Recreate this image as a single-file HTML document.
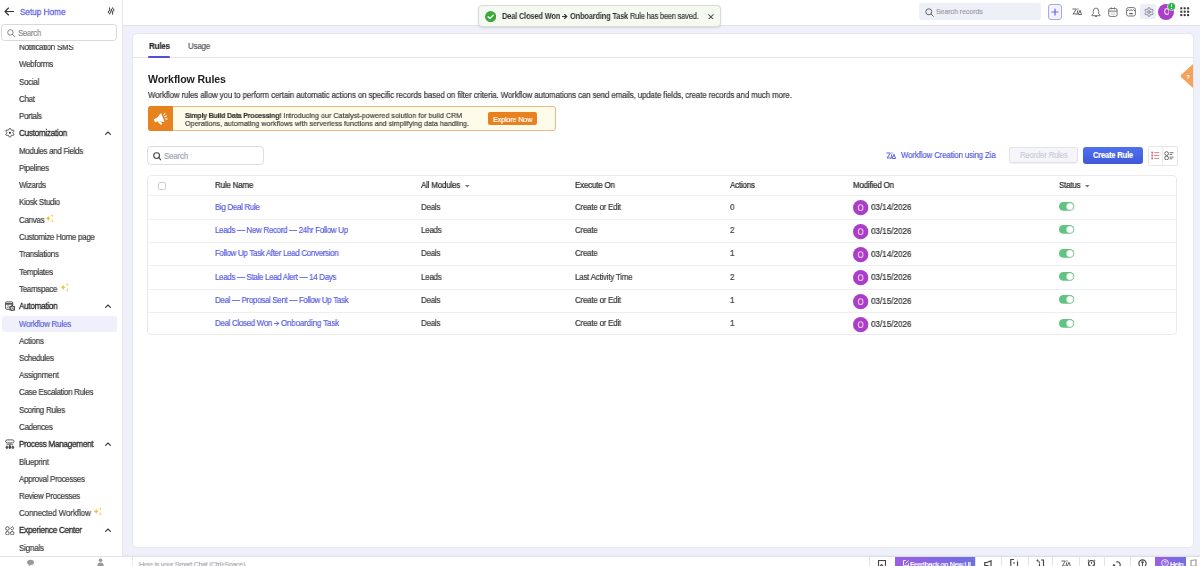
<!DOCTYPE html>
<html><head><meta charset="utf-8">
<style>
*{box-sizing:border-box;margin:0;padding:0}
html,body{width:1200px;height:566px;overflow:hidden;background:#eff0f9;font-family:"Liberation Sans",sans-serif;position:relative}
.a{position:absolute}
.t{position:absolute;white-space:nowrap;transform-origin:0 0;will-change:transform}
</style></head><body>
<div class="a" style="left:0.00px;top:0.00px;width:1200.00px;height:566.00px;background:#eff0f9"></div>
<div class="a" style="left:0.00px;top:0.00px;width:122.00px;height:557.00px;background:#fff"></div>
<div class="a" style="left:122.00px;top:0.00px;width:1.00px;height:557.00px;background:#e6e6eb"></div>
<div class="a" style="left:123.00px;top:0.00px;width:1077.00px;height:25.00px;background:#fff"></div>
<div class="a" style="left:123.00px;top:25.00px;width:1077.00px;height:1.00px;background:#e2e3e9"></div>
<div class="a" style="left:131.80px;top:33.20px;width:1061.80px;height:515.00px;background:#fff;border-radius:5px;border:1px solid #e6e7ef"></div>
<div class="a" style="left:0.00px;top:556.70px;width:1200.00px;height:9.30px;background:#fff"></div>
<div class="a" style="left:0.00px;top:556.20px;width:1200.00px;height:0.80px;background:#e6e7ee"></div>
<svg class="a" style="left:4.00px;top:7.00px;" width="10" height="9" viewBox="0 0 10 9"><path d="M9.5 4.5H1M4.5 1L1 4.5L4.5 8" fill="none" stroke="#333" stroke-width="1.1" stroke-linecap="round" stroke-linejoin="round"/></svg>
<div class="t" style="left:20.30px;top:7.63px;font-size:9.18px;line-height:9.18px;font-weight:400;color:#6366e0;transform:scaleX(0.8929);-webkit-text-stroke:0.32px #6366e0">Setup Home</div>
<svg class="a" style="left:106.80px;top:7.40px;" width="8" height="8" viewBox="0 0 8 8"><path d="M2.6 0.4V3.6M2.6 6.4V7.4M5.6 0.4V1.5M5.6 4.4V7.6" stroke="#444" stroke-width="1"/><circle cx="2.6" cy="5" r="1.35" fill="none" stroke="#444" stroke-width="1"/><circle cx="5.6" cy="3" r="1.35" fill="none" stroke="#444" stroke-width="1"/></svg>
<div class="a" style="left:1.20px;top:24.30px;width:116.30px;height:17.20px;border:1px solid #d8d8dd;border-radius:3.5px;background:#fff"></div>
<svg class="a" style="left:6.50px;top:29.00px;" width="8" height="8" viewBox="0 0 8 8"><circle cx="3.4" cy="3.4" r="2.7" fill="none" stroke="#777" stroke-width="0.9"/><path d="M5.4 5.4L7.6 7.6" stroke="#777" stroke-width="0.9" stroke-linecap="round"/></svg>
<div class="t" style="left:17.50px;top:29.12px;font-size:8.96px;line-height:8.96px;font-weight:400;color:#8a8a8a;transform:scaleX(0.8929);letter-spacing:-0.448px;-webkit-text-stroke:0.17px #8a8a8a">Search</div>
<div class="a" style="left:0;top:45.3px;width:122px;height:511px;overflow:hidden">
<div class="t" style="left:19.00px;top:-2.25px;font-size:8.96px;line-height:8.96px;font-weight:400;color:#3d3d3d;transform:scaleX(0.8929);letter-spacing:-0.336px;-webkit-text-stroke:0.22px #3d3d3d">Notification SMS</div>
<div class="t" style="left:19.00px;top:15.02px;font-size:8.96px;line-height:8.96px;font-weight:400;color:#3d3d3d;transform:scaleX(0.8929);letter-spacing:-0.336px;-webkit-text-stroke:0.22px #3d3d3d">Webforms</div>
<div class="t" style="left:19.00px;top:32.29px;font-size:8.96px;line-height:8.96px;font-weight:400;color:#3d3d3d;transform:scaleX(0.8929);letter-spacing:-0.336px;-webkit-text-stroke:0.22px #3d3d3d">Social</div>
<div class="t" style="left:19.00px;top:49.56px;font-size:8.96px;line-height:8.96px;font-weight:400;color:#3d3d3d;transform:scaleX(0.8929);letter-spacing:-0.336px;-webkit-text-stroke:0.22px #3d3d3d">Chat</div>
<div class="t" style="left:19.00px;top:66.83px;font-size:8.96px;line-height:8.96px;font-weight:400;color:#3d3d3d;transform:scaleX(0.8929);letter-spacing:-0.336px;-webkit-text-stroke:0.22px #3d3d3d">Portals</div>
<div class="t" style="left:19.00px;top:83.91px;font-size:9.18px;line-height:9.18px;font-weight:400;color:#2b2b2b;transform:scaleX(0.8929);letter-spacing:-0.336px;-webkit-text-stroke:0.32px #2b2b2b">Customization</div>
<svg class="a" style="left:5.00px;top:83.18px;" width="9.5" height="9.5" viewBox="0 0 9.5 9.5"><path d="M7.90 4.75L7.92 4.88L7.99 5.02L8.09 5.17L8.22 5.34L8.37 5.52L8.52 5.72L8.66 5.94L8.78 6.16L8.85 6.39L8.89 6.61L8.87 6.82L8.80 7.00L8.67 7.15L8.50 7.27L8.30 7.36L8.06 7.40L7.81 7.41L7.55 7.40L7.30 7.37L7.07 7.34L6.86 7.30L6.68 7.29L6.53 7.30L6.40 7.35L6.30 7.43L6.21 7.56L6.13 7.72L6.05 7.92L5.97 8.14L5.87 8.37L5.75 8.60L5.62 8.81L5.46 8.99L5.28 9.13L5.10 9.22L4.90 9.25L4.70 9.22L4.52 9.13L4.34 8.99L4.18 8.81L4.05 8.60L3.93 8.37L3.83 8.14L3.75 7.92L3.67 7.72L3.59 7.56L3.50 7.43L3.40 7.35L3.27 7.30L3.12 7.29L2.94 7.30L2.73 7.34L2.50 7.37L2.25 7.40L1.99 7.41L1.74 7.40L1.50 7.36L1.30 7.27L1.13 7.15L1.00 7.00L0.93 6.82L0.91 6.61L0.95 6.39L1.02 6.16L1.14 5.94L1.28 5.72L1.43 5.52L1.58 5.34L1.71 5.17L1.81 5.02L1.88 4.88L1.90 4.75L1.88 4.62L1.81 4.48L1.71 4.33L1.58 4.16L1.43 3.98L1.28 3.78L1.14 3.56L1.02 3.34L0.95 3.11L0.91 2.89L0.93 2.68L1.00 2.50L1.13 2.35L1.30 2.23L1.50 2.14L1.74 2.10L1.99 2.09L2.25 2.10L2.50 2.13L2.73 2.16L2.94 2.20L3.12 2.21L3.27 2.20L3.40 2.15L3.50 2.07L3.59 1.94L3.67 1.78L3.75 1.58L3.83 1.36L3.93 1.13L4.05 0.90L4.18 0.69L4.34 0.51L4.52 0.37L4.70 0.28L4.90 0.25L5.10 0.28L5.28 0.37L5.46 0.51L5.62 0.69L5.75 0.90L5.87 1.13L5.97 1.36L6.05 1.58L6.13 1.78L6.21 1.94L6.30 2.07L6.40 2.15L6.53 2.20L6.68 2.21L6.86 2.20L7.07 2.16L7.30 2.13L7.55 2.10L7.81 2.09L8.06 2.10L8.30 2.14L8.50 2.23L8.67 2.35L8.80 2.50L8.87 2.68L8.89 2.89L8.85 3.11L8.78 3.34L8.66 3.56L8.52 3.78L8.37 3.98L8.22 4.16L8.09 4.33L7.99 4.48L7.92 4.62Z" fill="none" stroke="#3a3a3a" stroke-width="0.95" stroke-linejoin="round"/><circle cx="4.9" cy="4.75" r="1.05" fill="#222"/></svg>
<svg class="a" style="left:104.50px;top:85.98px;" width="6" height="4" viewBox="0 0 6 4"><path d="M0.6 3.4L3 1L5.4 3.4" fill="none" stroke="#3a3a3a" stroke-width="1.1" stroke-linecap="round" stroke-linejoin="round"/></svg>
<div class="t" style="left:19.00px;top:101.37px;font-size:8.96px;line-height:8.96px;font-weight:400;color:#3d3d3d;transform:scaleX(0.8929);letter-spacing:-0.336px;-webkit-text-stroke:0.22px #3d3d3d">Modules and Fields</div>
<div class="t" style="left:19.00px;top:118.64px;font-size:8.96px;line-height:8.96px;font-weight:400;color:#3d3d3d;transform:scaleX(0.8929);letter-spacing:-0.336px;-webkit-text-stroke:0.22px #3d3d3d">Pipelines</div>
<div class="t" style="left:19.00px;top:135.91px;font-size:8.96px;line-height:8.96px;font-weight:400;color:#3d3d3d;transform:scaleX(0.8929);letter-spacing:-0.336px;-webkit-text-stroke:0.22px #3d3d3d">Wizards</div>
<div class="t" style="left:19.00px;top:153.18px;font-size:8.96px;line-height:8.96px;font-weight:400;color:#3d3d3d;transform:scaleX(0.8929);letter-spacing:-0.336px;-webkit-text-stroke:0.22px #3d3d3d">Kiosk Studio</div>
<div class="t" style="left:19.00px;top:170.45px;font-size:8.96px;line-height:8.96px;font-weight:400;color:#3d3d3d;transform:scaleX(0.8929);letter-spacing:-0.336px;-webkit-text-stroke:0.22px #3d3d3d">Canvas</div>
<svg class="a" style="left:45.25px;top:168.53px" width="10" height="9" viewBox="0 0 10 9"><path d="M3.2 1.8Q3.6 4.1 5.6 4.5Q3.6 4.9 3.2 7.2Q2.8 4.9 0.8 4.5Q2.8 4.1 3.2 1.8Z" fill="#f2c230"/><path d="M7.3 0.3Q7.5 1.5 8.5 1.7Q7.5 1.9 7.3 3.1Q7.1 1.9 6.1 1.7Q7.1 1.5 7.3 0.3Z" fill="#f2c230"/><path d="M7.3 5.6Q7.5 6.8 8.5 7Q7.5 7.2 7.3 8.4Q7.1 7.2 6.1 7Q7.1 6.8 7.3 5.6Z" fill="#f2c230"/></svg>
<div class="t" style="left:19.00px;top:187.72px;font-size:8.96px;line-height:8.96px;font-weight:400;color:#3d3d3d;transform:scaleX(0.8929);letter-spacing:-0.336px;-webkit-text-stroke:0.22px #3d3d3d">Customize Home page</div>
<div class="t" style="left:19.00px;top:204.99px;font-size:8.96px;line-height:8.96px;font-weight:400;color:#3d3d3d;transform:scaleX(0.8929);letter-spacing:-0.336px;-webkit-text-stroke:0.22px #3d3d3d">Translations</div>
<div class="t" style="left:19.00px;top:222.26px;font-size:8.96px;line-height:8.96px;font-weight:400;color:#3d3d3d;transform:scaleX(0.8929);letter-spacing:-0.336px;-webkit-text-stroke:0.22px #3d3d3d">Templates</div>
<div class="t" style="left:19.00px;top:239.53px;font-size:8.96px;line-height:8.96px;font-weight:400;color:#3d3d3d;transform:scaleX(0.8929);letter-spacing:-0.336px;-webkit-text-stroke:0.22px #3d3d3d">Teamspace</div>
<svg class="a" style="left:60.00px;top:237.61px" width="10" height="9" viewBox="0 0 10 9"><path d="M3.2 1.8Q3.6 4.1 5.6 4.5Q3.6 4.9 3.2 7.2Q2.8 4.9 0.8 4.5Q2.8 4.1 3.2 1.8Z" fill="#f2c230"/><path d="M7.3 0.3Q7.5 1.5 8.5 1.7Q7.5 1.9 7.3 3.1Q7.1 1.9 6.1 1.7Q7.1 1.5 7.3 0.3Z" fill="#f2c230"/><path d="M7.3 5.6Q7.5 6.8 8.5 7Q7.5 7.2 7.3 8.4Q7.1 7.2 6.1 7Q7.1 6.8 7.3 5.6Z" fill="#f2c230"/></svg>
<div class="t" style="left:19.00px;top:256.61px;font-size:9.18px;line-height:9.18px;font-weight:400;color:#2b2b2b;transform:scaleX(0.8929);letter-spacing:-0.336px;-webkit-text-stroke:0.32px #2b2b2b">Automation</div>
<svg class="a" style="left:5.00px;top:255.88px;" width="9.5" height="9.5" viewBox="0 0 9.5 9.5"><path d="M7.8 4.2V2Q7.8 0.9 6.7 0.9H1.7Q0.6 0.9 0.6 2V7.2Q0.6 8.3 1.7 8.3H4.2" fill="none" stroke="#555" stroke-width="1"/><path d="M0.6 2.9H7.8" stroke="#555" stroke-width="1.7"/><path d="M2.2 5H4.2M2.2 6.7H3.4" stroke="#666" stroke-width="0.9"/><path d="M9.05 7.30L9.11 7.47L9.27 7.66L9.47 7.91L9.64 8.19L9.72 8.48L9.67 8.72L9.48 8.90L9.19 8.97L8.86 8.96L8.55 8.91L8.30 8.87L8.12 8.90L8.01 9.04L7.92 9.27L7.81 9.57L7.65 9.86L7.44 10.07L7.20 10.15L6.96 10.07L6.75 9.86L6.59 9.57L6.48 9.27L6.39 9.04L6.28 8.90L6.10 8.87L5.85 8.91L5.54 8.96L5.21 8.97L4.92 8.90L4.73 8.73L4.68 8.48L4.76 8.19L4.93 7.91L5.13 7.66L5.29 7.47L5.35 7.30L5.29 7.13L5.13 6.94L4.93 6.69L4.76 6.41L4.68 6.12L4.73 5.88L4.92 5.70L5.21 5.63L5.54 5.64L5.85 5.69L6.10 5.73L6.27 5.70L6.39 5.56L6.48 5.33L6.59 5.03L6.75 4.74L6.96 4.53L7.20 4.45L7.44 4.53L7.65 4.74L7.81 5.03L7.92 5.33L8.01 5.56L8.12 5.70L8.30 5.73L8.55 5.69L8.86 5.64L9.19 5.63L9.48 5.70L9.67 5.88L9.72 6.12L9.64 6.41L9.47 6.69L9.27 6.94L9.11 7.13Z" fill="#fff" stroke="#444" stroke-width="1.1"/><circle cx="7.2" cy="7.3" r="0.7" fill="#444"/></svg>
<svg class="a" style="left:104.50px;top:258.68px;" width="6" height="4" viewBox="0 0 6 4"><path d="M0.6 3.4L3 1L5.4 3.4" fill="none" stroke="#3a3a3a" stroke-width="1.1" stroke-linecap="round" stroke-linejoin="round"/></svg>
<div class="a" style="left:2.00px;top:270.95px;width:115.00px;height:15.40px;background:#eff0fb;border-radius:3px"></div>
<div class="t" style="left:19.30px;top:274.37px;font-size:8.96px;line-height:8.96px;font-weight:400;color:#6064dc;transform:scaleX(0.8929);letter-spacing:-0.280px;-webkit-text-stroke:0.22px #6064dc">Workflow Rules</div>
<div class="t" style="left:19.00px;top:291.34px;font-size:8.96px;line-height:8.96px;font-weight:400;color:#3d3d3d;transform:scaleX(0.8929);letter-spacing:-0.224px;-webkit-text-stroke:0.22px #3d3d3d">Actions</div>
<div class="t" style="left:19.00px;top:308.61px;font-size:8.96px;line-height:8.96px;font-weight:400;color:#3d3d3d;transform:scaleX(0.8929);letter-spacing:-0.336px;-webkit-text-stroke:0.22px #3d3d3d">Schedules</div>
<div class="t" style="left:19.00px;top:325.88px;font-size:8.96px;line-height:8.96px;font-weight:400;color:#3d3d3d;transform:scaleX(0.8929);letter-spacing:-0.224px;-webkit-text-stroke:0.22px #3d3d3d">Assignment</div>
<div class="t" style="left:19.00px;top:343.15px;font-size:8.96px;line-height:8.96px;font-weight:400;color:#3d3d3d;transform:scaleX(0.8929);letter-spacing:-0.336px;-webkit-text-stroke:0.22px #3d3d3d">Case Escalation Rules</div>
<div class="t" style="left:19.00px;top:360.42px;font-size:8.96px;line-height:8.96px;font-weight:400;color:#3d3d3d;transform:scaleX(0.8929);letter-spacing:-0.336px;-webkit-text-stroke:0.22px #3d3d3d">Scoring Rules</div>
<div class="t" style="left:19.00px;top:377.69px;font-size:8.96px;line-height:8.96px;font-weight:400;color:#3d3d3d;transform:scaleX(0.8929);letter-spacing:-0.336px;-webkit-text-stroke:0.22px #3d3d3d">Cadences</div>
<div class="t" style="left:19.00px;top:394.77px;font-size:9.18px;line-height:9.18px;font-weight:400;color:#2b2b2b;transform:scaleX(0.8929);letter-spacing:-0.336px;-webkit-text-stroke:0.32px #2b2b2b">Process Management</div>
<svg class="a" style="left:5.00px;top:394.04px;" width="9.5" height="9.5" viewBox="0 0 9.5 9.5"><rect x="0.7" y="0.9" width="8.3" height="3" rx="1.5" fill="none" stroke="#555" stroke-width="1"/><path d="M4.85 3.9V5.4M1.9 6.4V5.4H7.8V6.4" fill="none" stroke="#777" stroke-width="1"/><ellipse cx="1.9" cy="8.3" rx="1.3" ry="1.6" fill="#555"/><ellipse cx="4.85" cy="7.9" rx="1.3" ry="2" fill="#444"/><ellipse cx="7.8" cy="8.3" rx="1.3" ry="1.6" fill="#555"/></svg>
<svg class="a" style="left:104.50px;top:396.84px;" width="6" height="4" viewBox="0 0 6 4"><path d="M0.6 3.4L3 1L5.4 3.4" fill="none" stroke="#3a3a3a" stroke-width="1.1" stroke-linecap="round" stroke-linejoin="round"/></svg>
<div class="t" style="left:19.00px;top:412.23px;font-size:8.96px;line-height:8.96px;font-weight:400;color:#3d3d3d;transform:scaleX(0.8929);letter-spacing:-0.224px;-webkit-text-stroke:0.22px #3d3d3d">Blueprint</div>
<div class="t" style="left:19.00px;top:429.50px;font-size:8.96px;line-height:8.96px;font-weight:400;color:#3d3d3d;transform:scaleX(0.8929);letter-spacing:-0.336px;-webkit-text-stroke:0.22px #3d3d3d">Approval Processes</div>
<div class="t" style="left:19.00px;top:446.77px;font-size:8.96px;line-height:8.96px;font-weight:400;color:#3d3d3d;transform:scaleX(0.8929);letter-spacing:-0.336px;-webkit-text-stroke:0.22px #3d3d3d">Review Processes</div>
<div class="t" style="left:19.00px;top:464.04px;font-size:8.96px;line-height:8.96px;font-weight:400;color:#3d3d3d;transform:scaleX(0.8929);letter-spacing:-0.123px;-webkit-text-stroke:0.22px #3d3d3d">Connected Workflow</div>
<svg class="a" style="left:93.00px;top:462.12px" width="10" height="9" viewBox="0 0 10 9"><path d="M3.2 1.8Q3.6 4.1 5.6 4.5Q3.6 4.9 3.2 7.2Q2.8 4.9 0.8 4.5Q2.8 4.1 3.2 1.8Z" fill="#f2c230"/><path d="M7.3 0.3Q7.5 1.5 8.5 1.7Q7.5 1.9 7.3 3.1Q7.1 1.9 6.1 1.7Q7.1 1.5 7.3 0.3Z" fill="#f2c230"/><path d="M7.3 5.6Q7.5 6.8 8.5 7Q7.5 7.2 7.3 8.4Q7.1 7.2 6.1 7Q7.1 6.8 7.3 5.6Z" fill="#f2c230"/></svg>
<div class="t" style="left:19.00px;top:481.12px;font-size:9.18px;line-height:9.18px;font-weight:400;color:#2b2b2b;transform:scaleX(0.8929);letter-spacing:-0.336px;-webkit-text-stroke:0.32px #2b2b2b">Experience Center</div>
<svg class="a" style="left:5.00px;top:480.39px;" width="9.5" height="9.5" viewBox="0 0 9.5 9.5"><circle cx="2.4" cy="2.5" r="1.75" fill="none" stroke="#555" stroke-width="0.95"/><path d="M7.2 0.6L9 2.4L7.2 4.2L5.4 2.4Z" fill="none" stroke="#555" stroke-width="0.95" stroke-linejoin="round"/><circle cx="2.4" cy="7.2" r="1.75" fill="none" stroke="#555" stroke-width="0.95"/><circle cx="7.2" cy="7.2" r="1.75" fill="none" stroke="#555" stroke-width="0.95"/></svg>
<svg class="a" style="left:104.50px;top:483.19px;" width="6" height="4" viewBox="0 0 6 4"><path d="M0.6 3.4L3 1L5.4 3.4" fill="none" stroke="#3a3a3a" stroke-width="1.1" stroke-linecap="round" stroke-linejoin="round"/></svg>
<div class="t" style="left:19.00px;top:498.58px;font-size:8.96px;line-height:8.96px;font-weight:400;color:#3d3d3d;transform:scaleX(0.8929);letter-spacing:-0.246px;-webkit-text-stroke:0.22px #3d3d3d">Signals</div>
</div>
<div class="a" style="left:919.40px;top:3.10px;width:121.20px;height:16.90px;background:#eef0f8;border-radius:3px"></div>
<svg class="a" style="left:924.50px;top:8.00px;" width="9" height="9" viewBox="0 0 9 9"><circle cx="3.8" cy="3.8" r="3" fill="none" stroke="#666" stroke-width="1"/><path d="M6 6L8.3 8.3" stroke="#666" stroke-width="1" stroke-linecap="round"/></svg>
<div class="t" style="left:935.60px;top:8.06px;font-size:7.84px;line-height:7.84px;font-weight:400;color:#9a9aa6;transform:scaleX(0.8929);letter-spacing:-0.056px;-webkit-text-stroke:0.2px #9a9aa6">Search records</div>
<div class="a" style="left:1048.30px;top:4.30px;width:14.10px;height:15.40px;background:#f3f2ff;border:1px solid #a9a6f0;border-radius:3px"></div>
<svg class="a" style="left:1051.30px;top:8.00px;" width="8" height="8" viewBox="0 0 8 8"><path d="M4 1V7M1 4H7" stroke="#6a66e0" stroke-width="1.2" stroke-linecap="round"/></svg>
<svg class="a" style="left:1072.00px;top:8.00px;" width="11" height="8" viewBox="0 0 11 8"><g transform="scale(1.0)" fill="none" stroke="#555" stroke-width="0.9" stroke-linecap="round" stroke-linejoin="round"><path d="M0.8 1H4.3L1.2 6.1Q2.6 5.6 4.5 6.1"/><path d="M5.7 2.7L5.1 6.1"/><path d="M6.3 6.1L8 2.3L9.4 6.1Z"/></g><circle cx="6.0" cy="0.9" r="0.6" fill="#555"/></svg>
<svg class="a" style="left:1090.80px;top:6.60px;" width="10" height="10.5" viewBox="0 0 10 10.5"><path d="M2.3 6.8V4.6Q2.3 1 5 1Q7.7 1 7.7 4.6V6.8L9.2 8.2Q9.4 8.7 8.9 8.7H1.1Q0.6 8.7 0.8 8.2Z" fill="none" stroke="#666" stroke-width="0.9" stroke-linejoin="round"/><path d="M3.9 8.9Q5 10.8 6.1 8.9" fill="#666" stroke="#666" stroke-width="0.7"/></svg>
<svg class="a" style="left:1108.30px;top:6.80px;" width="10" height="10" viewBox="0 0 10 10"><rect x="0.7" y="1.5" width="8.4" height="7.9" rx="1.6" fill="none" stroke="#666" stroke-width="0.9"/><path d="M0.7 4.1H9.1M3.2 0.4V2.4M6.6 0.4V2.4" stroke="#666" stroke-width="0.9"/><path d="M2.6 5.8H7.2M2.6 7.4H7.2" stroke="#bbb" stroke-width="0.6"/></svg>
<svg class="a" style="left:1125.80px;top:6.80px;" width="10" height="10" viewBox="0 0 10 10"><rect x="0.6" y="0.6" width="8.8" height="8.4" rx="1.8" fill="none" stroke="#666" stroke-width="0.9"/><path d="M0.6 4.4L2.4 2.6L3.8 3.9L5 2.6L6.2 3.9L7.6 2.6L9.4 4.4" fill="none" stroke="#666" stroke-width="0.9" stroke-linejoin="round"/><rect x="3.1" y="5.9" width="3.8" height="1.4" rx="0.7" fill="#555"/></svg>
<div class="a" style="left:1140.30px;top:4.00px;width:15.70px;height:15.30px;background:#eceefa;border-radius:2px"></div>
<svg class="a" style="left:1143.50px;top:6.70px;" width="10" height="10" viewBox="0 0 10 10"><path d="M7.95 5.00L7.97 5.13L8.04 5.27L8.14 5.41L8.27 5.58L8.42 5.76L8.57 5.96L8.71 6.17L8.83 6.39L8.91 6.62L8.94 6.84L8.92 7.04L8.85 7.22L8.73 7.38L8.56 7.49L8.36 7.58L8.12 7.62L7.87 7.63L7.62 7.62L7.37 7.58L7.14 7.55L6.93 7.51L6.75 7.50L6.60 7.51L6.48 7.55L6.37 7.64L6.29 7.76L6.21 7.93L6.14 8.12L6.05 8.34L5.96 8.57L5.84 8.80L5.71 9.01L5.55 9.19L5.38 9.33L5.19 9.42L5.00 9.45L4.81 9.42L4.62 9.33L4.45 9.19L4.29 9.01L4.16 8.80L4.04 8.57L3.95 8.34L3.86 8.12L3.79 7.93L3.71 7.76L3.63 7.64L3.53 7.55L3.40 7.51L3.25 7.50L3.07 7.51L2.86 7.55L2.63 7.58L2.38 7.62L2.13 7.63L1.88 7.62L1.64 7.58L1.44 7.49L1.27 7.38L1.15 7.23L1.08 7.04L1.06 6.84L1.09 6.62L1.17 6.39L1.29 6.17L1.43 5.96L1.58 5.76L1.73 5.58L1.86 5.41L1.96 5.27L2.03 5.13L2.05 5.00L2.03 4.87L1.96 4.73L1.86 4.59L1.73 4.42L1.58 4.24L1.43 4.04L1.29 3.83L1.17 3.61L1.09 3.38L1.06 3.16L1.08 2.96L1.15 2.77L1.27 2.62L1.44 2.51L1.64 2.42L1.88 2.38L2.13 2.37L2.38 2.38L2.63 2.42L2.86 2.45L3.07 2.49L3.25 2.50L3.40 2.49L3.52 2.45L3.63 2.36L3.71 2.24L3.79 2.07L3.86 1.88L3.95 1.66L4.04 1.43L4.16 1.20L4.29 0.99L4.45 0.81L4.62 0.67L4.81 0.58L5.00 0.55L5.19 0.58L5.38 0.67L5.55 0.81L5.71 0.99L5.84 1.20L5.96 1.43L6.05 1.66L6.14 1.88L6.21 2.07L6.29 2.24L6.37 2.36L6.47 2.45L6.60 2.49L6.75 2.50L6.93 2.49L7.14 2.45L7.37 2.42L7.62 2.38L7.87 2.37L8.12 2.38L8.36 2.42L8.56 2.51L8.73 2.62L8.85 2.78L8.92 2.96L8.94 3.16L8.91 3.38L8.83 3.61L8.71 3.83L8.57 4.04L8.42 4.24L8.27 4.42L8.14 4.59L8.04 4.73L7.97 4.87Z" fill="none" stroke="#6a6a72" stroke-width="0.9" stroke-linejoin="round"/><circle cx="5" cy="5" r="1.3" fill="none" stroke="#6a6a72" stroke-width="0.9"/></svg>
<div class="a" style="left:1158.20px;top:3.50px;width:16.00px;height:16.00px;background:#aa3ec8;border-radius:50%"></div>
<svg class="a" style="left:1163.60px;top:8.20px;" width="5.8" height="7" viewBox="0 0 5.8 7"><ellipse cx="2.9" cy="3.5" rx="2.2" ry="2.9" fill="none" stroke="#f3d0ff" stroke-width="1.1"/></svg>
<div class="a" style="left:1168.10px;top:2.80px;width:7.20px;height:7.20px;background:#33b24c;border-radius:50%;box-shadow:0 0 0 0.8px #c8f0c8"></div>
<div class="a" style="left:1171.30px;top:4.30px;width:0.90px;height:2.90px;background:#fff;border-radius:0.4px"></div>
<div class="a" style="left:1171.30px;top:7.60px;width:0.90px;height:0.90px;background:#fff"></div>
<svg class="a" style="left:1179.50px;top:7.40px;" width="10" height="10" viewBox="0 0 10 10"><rect x="0.3" y="0.3" width="2" height="2" fill="#333"/><rect x="0.3" y="3.6999999999999997" width="2" height="2" fill="#333"/><rect x="0.3" y="7.1" width="2" height="2" fill="#333"/><rect x="3.6999999999999997" y="0.3" width="2" height="2" fill="#333"/><rect x="3.6999999999999997" y="3.6999999999999997" width="2" height="2" fill="#333"/><rect x="3.6999999999999997" y="7.1" width="2" height="2" fill="#333"/><rect x="7.1" y="0.3" width="2" height="2" fill="#333"/><rect x="7.1" y="3.6999999999999997" width="2" height="2" fill="#333"/><rect x="7.1" y="7.1" width="2" height="2" fill="#333"/></svg>
<div class="a" style="left:477.60px;top:5.40px;width:243.20px;height:21.70px;background:#f4faf2;border:1px solid #d6ddd4;border-radius:4px;box-shadow:0 1px 2px rgba(0,0,0,0.12)"></div>
<svg class="a" style="left:485.20px;top:10.60px;" width="11.3" height="11.3" viewBox="0 0 11.3 11.3"><circle cx="5.65" cy="5.65" r="5.6" fill="#3da83a"/><path d="M3.1 5.8L4.9 7.5L8.2 4.1" fill="none" stroke="#fff" stroke-width="1.3" stroke-linecap="round" stroke-linejoin="round"/></svg>
<div class="t" style="left:502.00px;top:11.89px;font-size:8.40px;line-height:8.40px;font-weight:700;color:#2f332f;transform:scaleX(0.8929);letter-spacing:-0.213px">Deal Closed Won</div>
<svg class="a" style="left:562.30px;top:13.50px;" width="5.6" height="5" viewBox="0 0 5.6 5"><path d="M0.3 2.5H4.8M2.6 0.5L4.8 2.5L2.6 4.5" fill="none" stroke="#333" stroke-width="1.1" stroke-linecap="round" stroke-linejoin="round"/></svg>
<div class="t" style="left:570.00px;top:11.89px;font-size:8.40px;line-height:8.40px;font-weight:700;color:#2f332f;transform:scaleX(0.8929);letter-spacing:-0.213px">Onboarding Task</div>
<div class="t" style="left:630.30px;top:11.89px;font-size:8.40px;line-height:8.40px;font-weight:400;color:#3a3d3a;transform:scaleX(0.8929);letter-spacing:-0.213px;-webkit-text-stroke:0.22px #3a3d3a">Rule has been saved.</div>
<svg class="a" style="left:707.90px;top:13.60px;" width="5.8" height="5.8" viewBox="0 0 5.8 5.8"><path d="M0.6 0.6L5.2 5.2M5.2 0.6L0.6 5.2" stroke="#5a5a5a" stroke-width="1.05" stroke-linecap="round"/></svg>
<div class="t" style="left:149.00px;top:41.82px;font-size:8.96px;line-height:8.96px;font-weight:700;color:#2a2a2a;transform:scaleX(0.8929);letter-spacing:-0.224px;-webkit-text-stroke:0.17px #2a2a2a">Rules</div>
<div class="t" style="left:188.00px;top:41.82px;font-size:8.96px;line-height:8.96px;font-weight:400;color:#555;transform:scaleX(0.8929);letter-spacing:-0.224px;-webkit-text-stroke:0.2px #555">Usage</div>
<div class="a" style="left:132.50px;top:57.00px;width:1060.50px;height:0.90px;background:#e6e6ea"></div>
<div class="a" style="left:147.50px;top:55.60px;width:22.50px;height:2.20px;background:#4f52d8;border-radius:1px"></div>
<div class="t" style="left:147.50px;top:74.43px;font-size:10.60px;line-height:10.60px;font-weight:700;color:#222;letter-spacing:-0.100px">Workflow Rules</div>
<div class="t" style="left:147.50px;top:91.41px;font-size:8.85px;line-height:8.85px;font-weight:400;color:#3a3a3a;transform:scaleX(0.8929);letter-spacing:-0.123px;-webkit-text-stroke:0.22px #3a3a3a">Workflow rules allow you to perform certain automatic actions on specific records based on filter criteria. Workflow automations can send emails, update fields, create records and much more.</div>
<div class="a" style="left:147.50px;top:106.00px;width:408.50px;height:24.50px;background:#fffbea;border:1px solid #ecb886;border-radius:3px"></div>
<div class="a" style="left:147.50px;top:106.00px;width:25.50px;height:24.50px;background:#e8821f;border-radius:3px 0 0 3px"></div>
<svg class="a" style="left:152.50px;top:111.00px;" width="16" height="15" viewBox="0 0 16 15"><g transform="rotate(-22 8 7.5)"><path d="M1.5 5.5Q1 5.5 1 6.2V8.3Q1 9 1.5 9H4.2L10 12V2.5L4.2 5.5Z" fill="#fff"/><path d="M3.6 9L5.2 12.8Q5.5 13.4 6.2 13.2L6.9 12.9Q7.4 12.6 7.2 12L6 9.6Z" fill="#fff"/><path d="M11.8 5.2L13.6 4.2M12 7.3H14.2M11.8 9.4L13.6 10.4" stroke="#fff" stroke-width="1" stroke-linecap="round"/></g></svg>
<div class="t" style="left:185.00px;top:112.17px;font-size:7.95px;line-height:7.95px;font-weight:400;color:#444;transform:scaleX(0.8929);letter-spacing:0.056px;-webkit-text-stroke:0.22px #444"><b style='letter-spacing:-0.25px;color:#333;-webkit-text-stroke:0.15px #333'>Simply Build Data Processing!</b> Introducing our Catalyst-powered solution for build CRM</div>
<div class="t" style="left:185.00px;top:119.67px;font-size:7.95px;line-height:7.95px;font-weight:400;color:#444;transform:scaleX(0.8929);letter-spacing:0.034px;-webkit-text-stroke:0.22px #444">Operations, automating workflows with serverless functions and simplifying data handling.</div>
<div class="a" style="left:487.50px;top:112.00px;width:49.50px;height:13.00px;background:#e8821f;border-radius:2px"></div>
<div class="t" style="left:492.50px;top:115.57px;font-size:8.06px;line-height:8.06px;font-weight:400;color:#fff;transform:scaleX(0.8929);letter-spacing:-0.168px;-webkit-text-stroke:0.2px #fff">Explore Now</div>
<div class="a" style="left:147.20px;top:146.40px;width:116.50px;height:19.00px;border:1px solid #dcdde5;border-radius:4px;background:#fff"></div>
<svg class="a" style="left:152.50px;top:152.00px;" width="8.5" height="8.5" viewBox="0 0 8.5 8.5"><circle cx="3.6" cy="3.6" r="2.9" fill="none" stroke="#444" stroke-width="1.1"/><path d="M5.7 5.7L7.8 7.8" stroke="#444" stroke-width="1.1" stroke-linecap="round"/></svg>
<div class="t" style="left:164.00px;top:152.02px;font-size:8.96px;line-height:8.96px;font-weight:400;color:#9da2b6;transform:scaleX(0.8929);letter-spacing:-0.224px;-webkit-text-stroke:0.2px #9da2b6">Search</div>
<svg class="a" style="left:886.00px;top:151.50px;" width="11" height="8" viewBox="0 0 11 8"><g transform="scale(1.0)" fill="none" stroke="#5a5ee0" stroke-width="1.0" stroke-linecap="round" stroke-linejoin="round"><path d="M0.8 1H4.3L1.2 6.1Q2.6 5.6 4.5 6.1"/><path d="M5.7 2.7L5.1 6.1"/><path d="M6.3 6.1L8 2.3L9.4 6.1Z"/></g><circle cx="6.0" cy="0.9" r="0.6" fill="#5a5ee0"/></svg>
<div class="t" style="left:900.60px;top:151.31px;font-size:8.85px;line-height:8.85px;font-weight:400;color:#5a5ee0;transform:scaleX(0.8929);letter-spacing:-0.168px;-webkit-text-stroke:0.22px #5a5ee0">Workflow Creation using Zia</div>
<div class="a" style="left:1008.60px;top:147.00px;width:69.80px;height:16.20px;background:#f5f5fa;border:1px solid #e3e3ea;border-radius:3px;box-shadow:0 0.8px 1px rgba(0,0,0,0.06)"></div>
<div class="t" style="left:1019.80px;top:151.09px;font-size:8.51px;line-height:8.51px;font-weight:400;color:#c9cbd8;transform:scaleX(0.8929);letter-spacing:-0.112px;-webkit-text-stroke:0.2px #c9cbd8">Reorder Rules</div>
<div class="a" style="left:1082.60px;top:147.10px;width:60.70px;height:16.60px;background:linear-gradient(#4f70f0,#4058d6);border-radius:3px"></div>
<div class="t" style="left:1093.40px;top:151.40px;font-size:8.62px;line-height:8.62px;font-weight:700;color:#fff;transform:scaleX(0.8929);letter-spacing:-0.280px;-webkit-text-stroke:0.17px #fff">Create Rule</div>
<div class="a" style="left:1148.30px;top:146.30px;width:29.40px;height:19.30px;border:1px solid #e6e6e8;border-radius:1.5px;background:#fff"></div>
<div class="a" style="left:1161.60px;top:146.80px;width:0.80px;height:18.50px;background:#ebebed"></div>
<svg class="a" style="left:1151.00px;top:150.80px;" width="9" height="9" viewBox="0 0 9 9"><g fill="#d0607a"><rect x="0.3" y="0.7" width="1.8" height="1.8"/><rect x="0.3" y="3.6" width="1.8" height="1.8"/><rect x="0.3" y="6.5" width="1.8" height="1.8"/></g><path d="M3.2 1.6H8.2M3.2 4.5H8.2M3.2 7.4H8.2" stroke="#e27088" stroke-width="0.9"/></svg>
<svg class="a" style="left:1164.30px;top:150.50px;" width="10" height="9.5" viewBox="0 0 10 9.5"><circle cx="2.6" cy="2.6" r="1.9" fill="none" stroke="#555" stroke-width="0.85"/><circle cx="2.6" cy="7" r="1.9" fill="none" stroke="#555" stroke-width="0.85"/><path d="M5.6 1.7H9.5M5.6 3.4H8.3M5.6 6.1H9.5M5.6 7.8H8.3" stroke="#555" stroke-width="0.8"/></svg>
<div class="a" style="left:147.20px;top:175.20px;width:1030.00px;height:159.80px;border:1px solid #ebebee;border-radius:4px;background:#fff"></div>
<div class="a" style="left:158.10px;top:182.00px;width:8.30px;height:7.90px;border:1px solid #c9cad3;border-radius:1.5px;background:#fff"></div>
<div class="t" style="left:215.00px;top:181.02px;font-size:8.96px;line-height:8.96px;font-weight:400;color:#2a2a2a;transform:scaleX(0.8929);letter-spacing:-0.224px;-webkit-text-stroke:0.24px #2a2a2a">Rule Name</div>
<div class="t" style="left:421.00px;top:181.02px;font-size:8.96px;line-height:8.96px;font-weight:400;color:#2a2a2a;transform:scaleX(0.8929);letter-spacing:-0.224px;-webkit-text-stroke:0.24px #2a2a2a">All Modules</div>
<svg class="a" style="left:465.00px;top:184.60px;" width="4.5" height="3" viewBox="0 0 4.5 3"><path d="M0 0H4.5L2.25 2.5Z" fill="#777"/></svg>
<div class="t" style="left:575.00px;top:181.02px;font-size:8.96px;line-height:8.96px;font-weight:400;color:#2a2a2a;transform:scaleX(0.8929);letter-spacing:-0.224px;-webkit-text-stroke:0.24px #2a2a2a">Execute On</div>
<div class="t" style="left:730.00px;top:181.02px;font-size:8.96px;line-height:8.96px;font-weight:400;color:#2a2a2a;transform:scaleX(0.8929);letter-spacing:-0.224px;-webkit-text-stroke:0.24px #2a2a2a">Actions</div>
<div class="t" style="left:853.00px;top:181.02px;font-size:8.96px;line-height:8.96px;font-weight:400;color:#2a2a2a;transform:scaleX(0.8929);letter-spacing:-0.224px;-webkit-text-stroke:0.24px #2a2a2a">Modified On</div>
<div class="t" style="left:1059.00px;top:181.02px;font-size:8.96px;line-height:8.96px;font-weight:400;color:#2a2a2a;transform:scaleX(0.8929);letter-spacing:-0.224px;-webkit-text-stroke:0.24px #2a2a2a">Status</div>
<svg class="a" style="left:1085.30px;top:184.60px;" width="4.5" height="3" viewBox="0 0 4.5 3"><path d="M0 0H4.5L2.25 2.5Z" fill="#777"/></svg>
<div class="a" style="left:148.20px;top:195.30px;width:1028.00px;height:0.90px;background:#efeff2"></div>
<div class="t" style="left:215.00px;top:202.82px;font-size:8.96px;line-height:8.96px;font-weight:400;color:#5b5fdf;transform:scaleX(0.8929);letter-spacing:-0.370px;-webkit-text-stroke:0.22px #5b5fdf">Big Deal Rule</div>
<div class="t" style="left:421.00px;top:202.82px;font-size:8.96px;line-height:8.96px;font-weight:400;color:#3a3a3a;transform:scaleX(0.8929);letter-spacing:-0.280px;-webkit-text-stroke:0.22px #3a3a3a">Deals</div>
<div class="t" style="left:575.00px;top:202.82px;font-size:8.96px;line-height:8.96px;font-weight:400;color:#3a3a3a;transform:scaleX(0.8929);letter-spacing:-0.280px;-webkit-text-stroke:0.22px #3a3a3a">Create or Edit</div>
<div class="t" style="left:730.00px;top:202.82px;font-size:8.96px;line-height:8.96px;font-weight:400;color:#3a3a3a;transform:scaleX(0.8929);-webkit-text-stroke:0.22px #3a3a3a">0</div>
<svg class="a" style="left:853.00px;top:200.40px;" width="16" height="16" viewBox="0 0 16 16"><circle cx="7.65" cy="7.65" r="7.65" fill="#aa3ec8"/><ellipse cx="7.65" cy="7.65" rx="2.3" ry="2.85" fill="none" stroke="#f0c0ff" stroke-width="1.1"/></svg>
<div class="t" style="left:871.30px;top:203.32px;font-size:8.96px;line-height:8.96px;font-weight:400;color:#333;transform:scaleX(0.8929);letter-spacing:0.056px;-webkit-text-stroke:0.22px #333">03/14/2026</div>
<svg class="a" style="left:1058.90px;top:201.90px;" width="16" height="10" viewBox="0 0 16 10"><rect x="0" y="0" width="15.3" height="8.8" rx="4.4" fill="#62c482"/><circle cx="10.9" cy="4.4" r="3.5" fill="#fff" stroke="#a8cfb4" stroke-width="0.35"/></svg>
<div class="a" style="left:148.20px;top:218.63px;width:1028.00px;height:0.90px;background:#efeff2"></div>
<div class="t" style="left:215.00px;top:226.15px;font-size:8.96px;line-height:8.96px;font-weight:400;color:#5b5fdf;transform:scaleX(0.8929);letter-spacing:-0.370px;-webkit-text-stroke:0.22px #5b5fdf">Leads &#8212; New Record &#8212; 24hr Follow Up</div>
<div class="t" style="left:421.00px;top:226.15px;font-size:8.96px;line-height:8.96px;font-weight:400;color:#3a3a3a;transform:scaleX(0.8929);letter-spacing:-0.280px;-webkit-text-stroke:0.22px #3a3a3a">Leads</div>
<div class="t" style="left:575.00px;top:226.15px;font-size:8.96px;line-height:8.96px;font-weight:400;color:#3a3a3a;transform:scaleX(0.8929);letter-spacing:-0.280px;-webkit-text-stroke:0.22px #3a3a3a">Create</div>
<div class="t" style="left:730.00px;top:226.15px;font-size:8.96px;line-height:8.96px;font-weight:400;color:#3a3a3a;transform:scaleX(0.8929);-webkit-text-stroke:0.22px #3a3a3a">2</div>
<svg class="a" style="left:853.00px;top:223.73px;" width="16" height="16" viewBox="0 0 16 16"><circle cx="7.65" cy="7.65" r="7.65" fill="#aa3ec8"/><ellipse cx="7.65" cy="7.65" rx="2.3" ry="2.85" fill="none" stroke="#f0c0ff" stroke-width="1.1"/></svg>
<div class="t" style="left:871.30px;top:226.65px;font-size:8.96px;line-height:8.96px;font-weight:400;color:#333;transform:scaleX(0.8929);letter-spacing:0.056px;-webkit-text-stroke:0.22px #333">03/15/2026</div>
<svg class="a" style="left:1058.90px;top:225.23px;" width="16" height="10" viewBox="0 0 16 10"><rect x="0" y="0" width="15.3" height="8.8" rx="4.4" fill="#62c482"/><circle cx="10.9" cy="4.4" r="3.5" fill="#fff" stroke="#a8cfb4" stroke-width="0.35"/></svg>
<div class="a" style="left:148.20px;top:241.96px;width:1028.00px;height:0.90px;background:#efeff2"></div>
<div class="t" style="left:215.00px;top:249.48px;font-size:8.96px;line-height:8.96px;font-weight:400;color:#5b5fdf;transform:scaleX(0.8929);letter-spacing:-0.370px;-webkit-text-stroke:0.22px #5b5fdf">Follow Up Task After Lead Conversion</div>
<div class="t" style="left:421.00px;top:249.48px;font-size:8.96px;line-height:8.96px;font-weight:400;color:#3a3a3a;transform:scaleX(0.8929);letter-spacing:-0.280px;-webkit-text-stroke:0.22px #3a3a3a">Deals</div>
<div class="t" style="left:575.00px;top:249.48px;font-size:8.96px;line-height:8.96px;font-weight:400;color:#3a3a3a;transform:scaleX(0.8929);letter-spacing:-0.280px;-webkit-text-stroke:0.22px #3a3a3a">Create</div>
<div class="t" style="left:730.00px;top:249.48px;font-size:8.96px;line-height:8.96px;font-weight:400;color:#3a3a3a;transform:scaleX(0.8929);-webkit-text-stroke:0.22px #3a3a3a">1</div>
<svg class="a" style="left:853.00px;top:247.06px;" width="16" height="16" viewBox="0 0 16 16"><circle cx="7.65" cy="7.65" r="7.65" fill="#aa3ec8"/><ellipse cx="7.65" cy="7.65" rx="2.3" ry="2.85" fill="none" stroke="#f0c0ff" stroke-width="1.1"/></svg>
<div class="t" style="left:871.30px;top:249.98px;font-size:8.96px;line-height:8.96px;font-weight:400;color:#333;transform:scaleX(0.8929);letter-spacing:0.056px;-webkit-text-stroke:0.22px #333">03/14/2026</div>
<svg class="a" style="left:1058.90px;top:248.56px;" width="16" height="10" viewBox="0 0 16 10"><rect x="0" y="0" width="15.3" height="8.8" rx="4.4" fill="#62c482"/><circle cx="10.9" cy="4.4" r="3.5" fill="#fff" stroke="#a8cfb4" stroke-width="0.35"/></svg>
<div class="a" style="left:148.20px;top:265.29px;width:1028.00px;height:0.90px;background:#efeff2"></div>
<div class="t" style="left:215.00px;top:272.81px;font-size:8.96px;line-height:8.96px;font-weight:400;color:#5b5fdf;transform:scaleX(0.8929);letter-spacing:-0.370px;-webkit-text-stroke:0.22px #5b5fdf">Leads &#8212; Stale Lead Alert &#8212; 14 Days</div>
<div class="t" style="left:421.00px;top:272.81px;font-size:8.96px;line-height:8.96px;font-weight:400;color:#3a3a3a;transform:scaleX(0.8929);letter-spacing:-0.280px;-webkit-text-stroke:0.22px #3a3a3a">Leads</div>
<div class="t" style="left:575.00px;top:272.81px;font-size:8.96px;line-height:8.96px;font-weight:400;color:#3a3a3a;transform:scaleX(0.8929);letter-spacing:-0.280px;-webkit-text-stroke:0.22px #3a3a3a">Last Activity Time</div>
<div class="t" style="left:730.00px;top:272.81px;font-size:8.96px;line-height:8.96px;font-weight:400;color:#3a3a3a;transform:scaleX(0.8929);-webkit-text-stroke:0.22px #3a3a3a">2</div>
<svg class="a" style="left:853.00px;top:270.39px;" width="16" height="16" viewBox="0 0 16 16"><circle cx="7.65" cy="7.65" r="7.65" fill="#aa3ec8"/><ellipse cx="7.65" cy="7.65" rx="2.3" ry="2.85" fill="none" stroke="#f0c0ff" stroke-width="1.1"/></svg>
<div class="t" style="left:871.30px;top:273.31px;font-size:8.96px;line-height:8.96px;font-weight:400;color:#333;transform:scaleX(0.8929);letter-spacing:0.056px;-webkit-text-stroke:0.22px #333">03/15/2026</div>
<svg class="a" style="left:1058.90px;top:271.89px;" width="16" height="10" viewBox="0 0 16 10"><rect x="0" y="0" width="15.3" height="8.8" rx="4.4" fill="#62c482"/><circle cx="10.9" cy="4.4" r="3.5" fill="#fff" stroke="#a8cfb4" stroke-width="0.35"/></svg>
<div class="a" style="left:148.20px;top:288.62px;width:1028.00px;height:0.90px;background:#efeff2"></div>
<div class="t" style="left:215.00px;top:296.14px;font-size:8.96px;line-height:8.96px;font-weight:400;color:#5b5fdf;transform:scaleX(0.8929);letter-spacing:-0.370px;-webkit-text-stroke:0.22px #5b5fdf">Deal &#8212; Proposal Sent &#8212; Follow Up Task</div>
<div class="t" style="left:421.00px;top:296.14px;font-size:8.96px;line-height:8.96px;font-weight:400;color:#3a3a3a;transform:scaleX(0.8929);letter-spacing:-0.280px;-webkit-text-stroke:0.22px #3a3a3a">Deals</div>
<div class="t" style="left:575.00px;top:296.14px;font-size:8.96px;line-height:8.96px;font-weight:400;color:#3a3a3a;transform:scaleX(0.8929);letter-spacing:-0.280px;-webkit-text-stroke:0.22px #3a3a3a">Create or Edit</div>
<div class="t" style="left:730.00px;top:296.14px;font-size:8.96px;line-height:8.96px;font-weight:400;color:#3a3a3a;transform:scaleX(0.8929);-webkit-text-stroke:0.22px #3a3a3a">1</div>
<svg class="a" style="left:853.00px;top:293.72px;" width="16" height="16" viewBox="0 0 16 16"><circle cx="7.65" cy="7.65" r="7.65" fill="#aa3ec8"/><ellipse cx="7.65" cy="7.65" rx="2.3" ry="2.85" fill="none" stroke="#f0c0ff" stroke-width="1.1"/></svg>
<div class="t" style="left:871.30px;top:296.64px;font-size:8.96px;line-height:8.96px;font-weight:400;color:#333;transform:scaleX(0.8929);letter-spacing:0.056px;-webkit-text-stroke:0.22px #333">03/15/2026</div>
<svg class="a" style="left:1058.90px;top:295.22px;" width="16" height="10" viewBox="0 0 16 10"><rect x="0" y="0" width="15.3" height="8.8" rx="4.4" fill="#62c482"/><circle cx="10.9" cy="4.4" r="3.5" fill="#fff" stroke="#a8cfb4" stroke-width="0.35"/></svg>
<div class="a" style="left:148.20px;top:311.95px;width:1028.00px;height:0.90px;background:#efeff2"></div>
<div class="t" style="left:215.00px;top:319.47px;font-size:8.96px;line-height:8.96px;font-weight:400;color:#5b5fdf;transform:scaleX(0.8929);letter-spacing:-0.370px;-webkit-text-stroke:0.22px #5b5fdf">Deal Closed Won</div>
<svg class="a" style="left:273.90px;top:320.75px;" width="6" height="5" viewBox="0 0 6 5"><path d="M0.3 2.5H4.8M2.6 0.5L4.8 2.5L2.6 4.5" fill="none" stroke="#5b5fdf" stroke-width="0.9" stroke-linecap="round" stroke-linejoin="round"/></svg>
<div class="t" style="left:281.30px;top:319.47px;font-size:8.96px;line-height:8.96px;font-weight:400;color:#5b5fdf;transform:scaleX(0.8929);letter-spacing:-0.168px;-webkit-text-stroke:0.22px #5b5fdf">Onboarding Task</div>
<div class="t" style="left:421.00px;top:319.47px;font-size:8.96px;line-height:8.96px;font-weight:400;color:#3a3a3a;transform:scaleX(0.8929);letter-spacing:-0.280px;-webkit-text-stroke:0.22px #3a3a3a">Deals</div>
<div class="t" style="left:575.00px;top:319.47px;font-size:8.96px;line-height:8.96px;font-weight:400;color:#3a3a3a;transform:scaleX(0.8929);letter-spacing:-0.280px;-webkit-text-stroke:0.22px #3a3a3a">Create or Edit</div>
<div class="t" style="left:730.00px;top:319.47px;font-size:8.96px;line-height:8.96px;font-weight:400;color:#3a3a3a;transform:scaleX(0.8929);-webkit-text-stroke:0.22px #3a3a3a">1</div>
<svg class="a" style="left:853.00px;top:317.05px;" width="16" height="16" viewBox="0 0 16 16"><circle cx="7.65" cy="7.65" r="7.65" fill="#aa3ec8"/><ellipse cx="7.65" cy="7.65" rx="2.3" ry="2.85" fill="none" stroke="#f0c0ff" stroke-width="1.1"/></svg>
<div class="t" style="left:871.30px;top:319.97px;font-size:8.96px;line-height:8.96px;font-weight:400;color:#333;transform:scaleX(0.8929);letter-spacing:0.056px;-webkit-text-stroke:0.22px #333">03/15/2026</div>
<svg class="a" style="left:1058.90px;top:318.55px;" width="16" height="10" viewBox="0 0 16 10"><rect x="0" y="0" width="15.3" height="8.8" rx="4.4" fill="#62c482"/><circle cx="10.9" cy="4.4" r="3.5" fill="#fff" stroke="#a8cfb4" stroke-width="0.35"/></svg>
<svg class="a" style="left:1180.00px;top:64.00px;" width="13" height="24" viewBox="0 0 13 24"><path d="M13 0V24L1.2 13.3Q0 12 1.2 10.7Z" fill="#f5a25a"/><text x="8.2" y="14.8" font-family="Liberation Sans" font-size="6" font-weight="700" fill="#fff" text-anchor="middle">?</text></svg>
<div class="a" style="left:123.00px;top:553.80px;width:1077.00px;height:3.00px;background:linear-gradient(rgba(220,222,230,0),rgba(220,222,230,0.6))"></div>
<div class="a" style="left:0.00px;top:556.00px;width:1200.00px;height:0.80px;background:#e2e3ea"></div>
<div class="a" style="left:132.30px;top:556.80px;width:0.80px;height:10.00px;background:#e8e8ee"></div>
<svg class="a" style="left:25.50px;top:558.50px;" width="9" height="8" viewBox="0 0 9 8"><path d="M1 3.5Q1 0.8 4.5 0.8Q8 0.8 8 3.5Q8 6 4.5 6L2.5 7.5L2.8 5.6Q1 5 1 3.5Z" fill="#999"/></svg>
<svg class="a" style="left:96.50px;top:558.30px;" width="7" height="8" viewBox="0 0 7 8"><circle cx="3.5" cy="2.2" r="1.8" fill="#999"/><path d="M0.3 8Q0.3 4.6 3.5 4.6Q6.7 4.6 6.7 8Z" fill="#999"/></svg>
<div class="t" style="left:138.70px;top:561.48px;font-size:7.35px;line-height:7.35px;font-weight:400;color:#a8a8b0;transform:scaleX(0.9524);letter-spacing:-0.304px;-webkit-text-stroke:0.2px #a8a8b0">Here is your Smart Chat (Ctrl+Space)</div>
<div class="a" style="left:868.80px;top:556.30px;width:331.20px;height:10.00px;background:#fff"></div>
<div class="a" style="left:868.80px;top:556.30px;width:0.80px;height:10.00px;background:#e3e3ea"></div>
<div class="a" style="left:894.80px;top:556.30px;width:0.80px;height:10.00px;background:#e3e3ea"></div>
<div class="a" style="left:975.40px;top:556.30px;width:0.80px;height:10.00px;background:#e3e3ea"></div>
<div class="a" style="left:1001.20px;top:556.30px;width:0.80px;height:10.00px;background:#e3e3ea"></div>
<div class="a" style="left:1027.50px;top:556.30px;width:0.80px;height:10.00px;background:#e3e3ea"></div>
<div class="a" style="left:1052.00px;top:556.30px;width:0.80px;height:10.00px;background:#e3e3ea"></div>
<div class="a" style="left:1078.70px;top:556.30px;width:0.80px;height:10.00px;background:#e3e3ea"></div>
<div class="a" style="left:1103.80px;top:556.30px;width:0.80px;height:10.00px;background:#e3e3ea"></div>
<div class="a" style="left:1130.00px;top:556.30px;width:0.80px;height:10.00px;background:#e3e3ea"></div>
<div class="a" style="left:1155.00px;top:556.30px;width:0.80px;height:10.00px;background:#e3e3ea"></div>
<div class="a" style="left:868.80px;top:556.30px;width:331.20px;height:0.80px;background:#dcdde5"></div>
<div class="a" style="left:894.80px;top:557.20px;width:80.60px;height:9.00px;background:linear-gradient(90deg,#9c5fe0,#6f6fe2)"></div>
<svg class="a" style="left:902.80px;top:559.80px;" width="6" height="6.2" viewBox="0 0 6 6.2"><path d="M2.8 0.5H0.5V5.7H5.5V3.3" fill="none" stroke="#fff" stroke-width="0.9"/><path d="M2.3 3.8L5.6 0.5" stroke="#fff" stroke-width="0.9"/></svg>
<div class="t" style="left:910.00px;top:561.48px;font-size:7.35px;line-height:7.35px;font-weight:700;color:#fff;transform:scaleX(0.9524);letter-spacing:-0.430px">Feedback on New UI</div>
<div class="a" style="left:1155.00px;top:557.20px;width:31.00px;height:9.00px;background:linear-gradient(90deg,#9c5fe0,#6f6fe2)"></div>
<svg class="a" style="left:1160.50px;top:558.50px;" width="8" height="8" viewBox="0 0 8 8"><circle cx="4" cy="4" r="3.4" fill="none" stroke="#fff" stroke-width="0.8"/><text x="4" y="6.2" font-family="Liberation Sans" font-size="5.5" fill="#fff" text-anchor="middle">?</text></svg>
<div class="t" style="left:1169.70px;top:561.48px;font-size:7.35px;line-height:7.35px;font-weight:700;color:#fff;transform:scaleX(0.9524);letter-spacing:-0.462px">Help</div>
<svg class="a" style="left:878.00px;top:559.50px;" width="8" height="7" viewBox="0 0 8 7"><rect x="0.5" y="0.5" width="7" height="6.5" fill="none" stroke="#444" stroke-width="1.15"/><path d="M1.5 7L3.5 4.5L5 6" fill="none" stroke="#444" stroke-width="1.15"/></svg>
<svg class="a" style="left:984.00px;top:559.50px;" width="9" height="7" viewBox="0 0 9 7"><path d="M0.8 2.5H3L7 0.8V7L3 5.5H0.8Z" fill="none" stroke="#444" stroke-width="1.2"/></svg>
<svg class="a" style="left:1010.00px;top:559.30px;" width="9" height="7" viewBox="0 0 9 7"><path d="M4 0.5H0.8V7" fill="none" stroke="#444" stroke-width="1.15"/><path d="M3 4H5M7.5 2.5V7" stroke="#444" stroke-width="1.15"/><circle cx="7.5" cy="1" r="0.6" fill="#e06060"/></svg>
<svg class="a" style="left:1035.50px;top:559.30px;" width="9" height="7" viewBox="0 0 9 7"><circle cx="1.5" cy="1.5" r="1" fill="#444"/><path d="M2.5 2.5L4 3.5M5 1H7.5V7M3.5 7V4.5" fill="none" stroke="#444" stroke-width="1.15"/></svg>
<svg class="a" style="left:1061.00px;top:559.50px;" width="11" height="8" viewBox="0 0 11 8"><g transform="scale(1.0)" fill="none" stroke="#555" stroke-width="0.9" stroke-linecap="round" stroke-linejoin="round"><path d="M0.8 1H4.3L1.2 6.1Q2.6 5.6 4.5 6.1"/><path d="M5.7 2.7L5.1 6.1"/><path d="M6.3 6.1L8 2.3L9.4 6.1Z"/></g><circle cx="6.0" cy="0.9" r="0.6" fill="#555"/></svg>
<svg class="a" style="left:1086.50px;top:559.00px;" width="9" height="7" viewBox="0 0 9 7"><circle cx="4.5" cy="4.5" r="3" fill="none" stroke="#444" stroke-width="1.15"/><path d="M0.8 1.8L2 0.8M8.2 1.8L7 0.8M4.5 3V4.8" stroke="#444" stroke-width="1"/></svg>
<svg class="a" style="left:1112.00px;top:559.50px;" width="9" height="7" viewBox="0 0 9 7"><circle cx="2" cy="5.5" r="1.2" fill="#444"/><path d="M4 2A3 3 0 1 1 4 7.5" fill="none" stroke="#444" stroke-width="1.15"/></svg>
<svg class="a" style="left:1137.50px;top:558.80px;" width="9" height="8" viewBox="0 0 9 8"><circle cx="4.5" cy="4.5" r="3.6" fill="none" stroke="#444" stroke-width="1.15"/><path d="M4.5 3V7.5M3 3.5L4.5 2.5L6 3.5" fill="none" stroke="#444" stroke-width="1"/></svg>
<svg class="a" style="left:1190.00px;top:559.00px;" width="8" height="8" viewBox="0 0 8 8"><path d="M1 1.5L6 0.8V7H1Z" fill="none" stroke="#999" stroke-width="1.15"/></svg>
</body></html>
